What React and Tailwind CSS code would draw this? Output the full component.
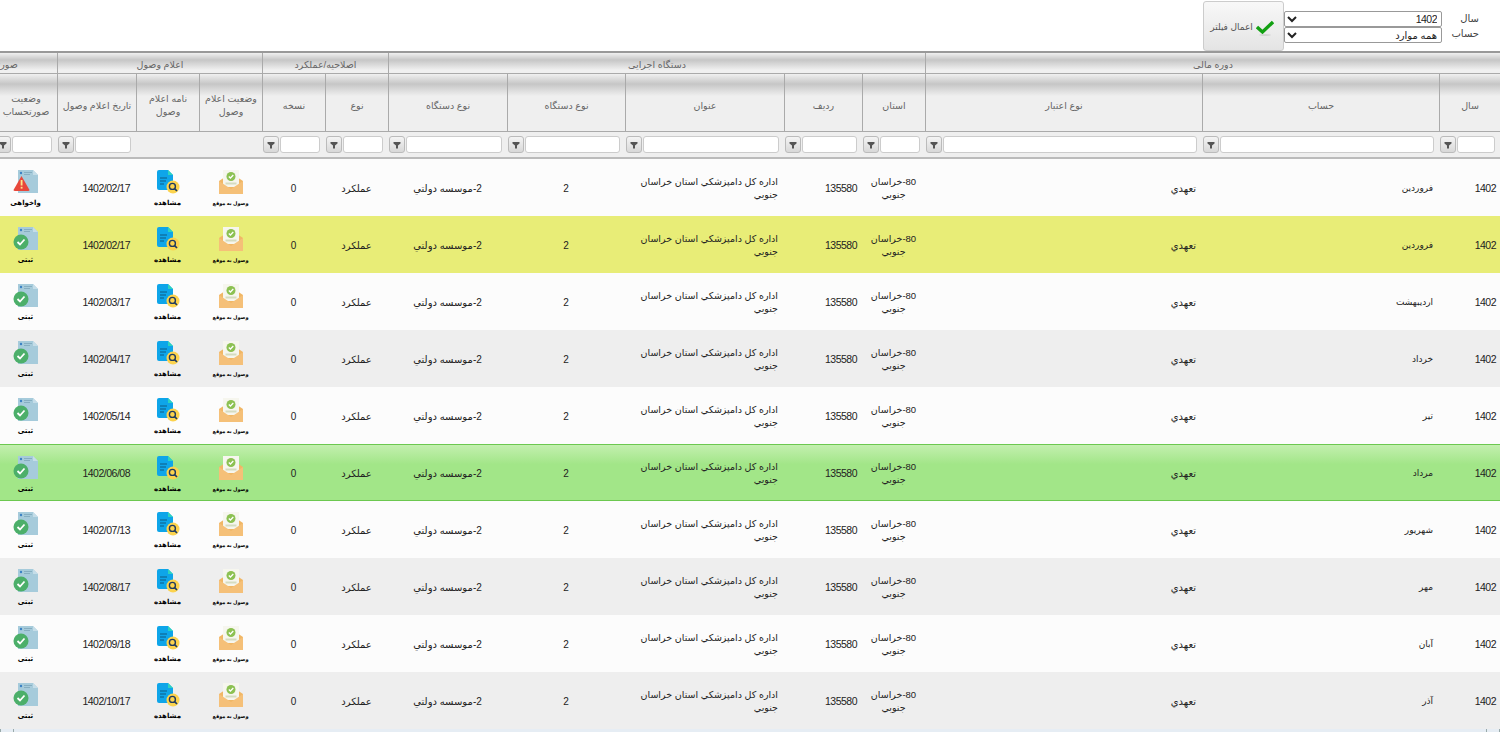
import React from 'react';

const COLS = 'grid grid-cols-[61px_237px_277px_63px_78px_159px_118px_119px_63px_63px_63px_63px_79px_63px]';
const GROUP_COLS = 'grid grid-cols-[575px_537px_126px_205px_126px]';
const FONT = "font-['Liberation_Sans','DejaVu_Sans',sans-serif]";

const groups = ['دوره مالی', 'دستگاه اجرایی', 'اصلاحیه/عملکرد', 'اعلام وصول', 'صورتحساب'];

const columns = [
  { title: 'سال', filter: true },
  { title: 'حساب', filter: true },
  { title: 'نوع اعتبار', filter: true },
  { title: 'استان', filter: true },
  { title: 'ردیف', filter: true },
  { title: 'عنوان', filter: true },
  { title: 'نوع دستگاه', filter: true },
  { title: 'نوع دستگاه', filter: true },
  { title: 'نوع', filter: true },
  { title: 'نسخه', filter: true },
  { title: 'وضعیت اعلام وصول', filter: false },
  { title: 'نامه اعلام وصول', filter: false },
  { title: 'تاریخ اعلام وصول', filter: true },
  { title: 'وضعیت صورتحساب', filter: true },
];

const rows = [
  { month: 'فروردین', date: '1402/02/17', status: 'واخواهی', warn: true },
  { month: 'فروردین', date: '1402/02/17', status: 'ثبتی', tone: 'yellow' },
  { month: 'اردیبهشت', date: '1402/03/17', status: 'ثبتی' },
  { month: 'خرداد', date: '1402/04/17', status: 'ثبتی', tone: 'gray' },
  { month: 'تیر', date: '1402/05/14', status: 'ثبتی' },
  { month: 'مرداد', date: '1402/06/08', status: 'ثبتی', tone: 'green' },
  { month: 'شهریور', date: '1402/07/13', status: 'ثبتی' },
  { month: 'مهر', date: '1402/08/17', status: 'ثبتی', tone: 'gray' },
  { month: 'آبان', date: '1402/09/18', status: 'ثبتی' },
  { month: 'آذر', date: '1402/10/17', status: 'ثبتی', tone: 'gray' },
];

function EnvelopeIcon() {
  return (
    <svg width="24" height="24" viewBox="0 0 24 24">
      <path d="M0 11 L12 3 L24 11 V24 H0 Z" fill="#f0b765" />
      <rect x="4" y="0" width="16" height="17" fill="#f6f6ee" />
      <circle cx="12" cy="6.5" r="4.5" fill="#8cc152" />
      <path d="M9.8 6.5 L11.4 8 L14.3 5" fill="none" stroke="#fff" strokeWidth="1.3" />
      <rect x="6.5" y="12.5" width="11" height="2" fill="#d5dcc0" />
      <path d="M0 11 L12 19 L24 11 V24 H0 Z" fill="#f5c078" />
    </svg>
  );
}

function ViewIcon() {
  return (
    <svg width="24" height="24" viewBox="0 0 24 24">
      <path d="M1 2 Q1 0 3 0 H12 L17 5 V19 Q17 20 15 20 H3 Q1 20 1 18 Z" fill="#0ea5e9" />
      <path d="M12 0 L17 5 H12 Z" fill="#2dd4bf" />
      <path d="M4 8 H11 M4 11 H10 M4 14 H8" stroke="#0f5c86" strokeWidth="1.2" />
      <circle cx="17" cy="17" r="6.5" fill="#fcd34d" />
      <circle cx="16.4" cy="16.4" r="3" fill="none" stroke="#1f3a5f" strokeWidth="1.4" />
      <path d="M18.6 18.6 L21 21" stroke="#1f3a5f" strokeWidth="1.6" />
    </svg>
  );
}

function StatusIcon({ warn }) {
  return (
    <svg width="26" height="24" viewBox="0 0 26 24">
      <path d="M5 0 H20 L25 5 V23 H5 Z" fill="#a6cbdb" />
      <path d="M20 0 L25 5 H20 Z" fill="#c5dde8" />
      <circle cx="8" cy="3" r="1.2" fill="#3b82c4" />
      <path d="M11 2.5 H19 M11 4.5 H17" stroke="#7ea6ba" strokeWidth="0.8" />
      {warn ? (
        <g>
          <path d="M8.5 6 L16.5 20 Q16.5 21 15 21 H2 Q0.5 21 0.5 20 Z" fill="#e8483b" />
          <rect x="7.7" y="10" width="1.8" height="5.5" fill="#fde68a" />
          <rect x="7.7" y="16.8" width="1.8" height="1.8" fill="#fde68a" />
        </g>
      ) : (
        <g>
          <circle cx="8" cy="15" r="7.5" fill="#4caf6a" />
          <path d="M4.5 15 L7 17.5 L11.5 12.5" fill="none" stroke="#fff" strokeWidth="1.8" />
        </g>
      )}
    </svg>
  );
}

function FunnelIcon() {
  return (
    <svg width="8" height="8" viewBox="0 0 8 8">
      <path d="M0.5 1 H7.5 V2.5 L5 4.5 V7.5 H3 V4.5 L0.5 2.5 Z" fill="#555" />
    </svg>
  );
}

function FilterCell({ column }) {
  if (!column.filter) return <div />;
  return (
    <div className="flex flex-row-reverse items-center gap-px pr-[5px] pl-px">
      <span className="flex h-[17px] w-[16px] shrink-0 items-center justify-center rounded-[3px] border border-[#bbb] bg-[linear-gradient(#f4f4f4,#d8d8d8)]">
        <FunnelIcon />
      </span>
      <input className="h-[17px] min-w-0 flex-1 rounded-[3px] border border-[#ccc] bg-white" />
    </div>
  );
}

function IconCell({ icon, label, size }) {
  return (
    <div className="flex flex-col items-center gap-[5px] pt-[11px]">
      {icon}
      <span className={`font-bold leading-none text-black ${size}`}>{label}</span>
    </div>
  );
}

function Row({ row }) {
  const tones = {
    yellow: 'bg-[#e8ed77]',
    gray: 'bg-[#eeeeee]',
    green: 'bg-[linear-gradient(#c3efaf,#a2e688_35%)] border-y border-[#6cc850]',
  };
  const tone = tones[row.tone] || 'bg-[#fcfcfc]';
  const num = 'text-[10.5px] tracking-[-0.5px]';
  return (
    <div className={`${COLS} h-[57px] text-[10px] leading-[13px] text-[#222] ${tone}`}>
      <div className={`flex items-center pt-px pr-1 ${num}`}>1402</div>
      <div className="flex items-center pt-px pr-1.5 text-[9px]">{row.month}</div>
      <div className="flex items-center pt-px pr-1.5">تعهدي</div>
      <div className="flex items-center justify-center px-2 text-center text-[9.5px]">80-خراسان جنوبي</div>
      <div className={`flex items-center pt-px pr-[5px] ${num}`}>135580</div>
      <div className="flex items-center pr-1.5 pl-1 text-[9.5px]">اداره کل دامپزشکي استان خراسان جنوبي</div>
      <div className="flex items-center justify-center pt-px">2</div>
      <div className="flex items-center justify-center pt-px">2-موسسه دولتي</div>
      <div className="flex items-center justify-center pt-px">عملکرد</div>
      <div className="flex items-center justify-center pt-px">0</div>
      <IconCell icon={<EnvelopeIcon />} label="وصول به موقع" size="mt-[2px] text-[5px]" />
      <IconCell icon={<ViewIcon />} label="مشاهده" size="text-[7px]" />
      <div className={`flex items-center pt-px pr-1.5 ${num}`}>{row.date}</div>
      <IconCell icon={<StatusIcon warn={row.warn} />} label={row.status} size="text-[7px]" />
    </div>
  );
}

export default function App() {
  return (
    <div dir="rtl" className={`h-[732px] w-[1500px] overflow-hidden bg-white ${FONT}`}>
      {/* filter bar */}
      <div className="flex h-[53px] items-start border-b-2 border-[#999] pt-px pr-[21px]">
        <div className="w-[37px] pt-[10px] text-[10px] leading-[15px] text-[#444]">
          <div>سال</div>
          <div>حساب</div>
        </div>
        <div className="w-[158px] pt-[10px] text-[10px]">
          <select dir="rtl" className="block h-[16px] w-full rounded-[2px] border border-[#999] bg-white text-[10.5px] leading-none tracking-[-0.5px] text-[#222]">
            <option>1402</option>
          </select>
          <select dir="rtl" className="block h-[16px] w-full rounded-[2px] border border-[#999] bg-white text-[10px] leading-none text-[#222]">
            <option>همه موارد</option>
          </select>
        </div>
        <button className="flex h-[50px] w-[81px] items-center justify-center gap-[3px] rounded-[3px] border border-[#ccc] bg-[linear-gradient(#f8f8f8,#e4e4e4)] pr-[3px] pt-[3px] text-[9px] text-[#555]">
          <svg width="18" height="16" viewBox="0 0 18 16">
            <path d="M1 7 L6.5 12 L17 2" fill="none" stroke="#12a012" strokeWidth="3.4" />
            <ellipse cx="9" cy="15" rx="6" ry="0.7" fill="#ccc" />
          </svg>
          <span>اعمال فیلتر</span>
        </button>
      </div>

      {/* group headers */}
      <div className={`${GROUP_COLS} h-[21px] border-b border-[#aaa] bg-[linear-gradient(#f0f0f0,#c6c6c6_35%,#f0f0f0_85%)] text-[9.5px] leading-[24px] text-[#666]`}>
        {groups.map((g) => (
          <div key={g} className="border-l border-[#aaa] text-center">{g}</div>
        ))}
      </div>

      {/* column headers */}
      <div className={`${COLS} h-[58px] border-b border-[#aaa] bg-[linear-gradient(#f0f0f0,#c6c6c6_10px,#efefef_22px)] text-[9.5px] leading-[13px] text-[#666]`}>
        {columns.map((c, i) => (
          <div key={i} className="flex items-center justify-center border-l border-[#aaa] px-1 pt-[5px] text-center">{c.title}</div>
        ))}
      </div>

      {/* filters */}
      <div className={`${COLS} h-[27px] items-center border-b-2 border-[#bbb] bg-[#efefef]`}>
        {columns.map((c, i) => (
          <FilterCell key={i} column={c} />
        ))}
      </div>

      {rows.map((row, i) => (
        <Row key={i} row={row} />
      ))}

      {/* horizontal scrollbar */}
      <div className="flex h-[4px] justify-between bg-[#e6edf4]">
        <span className="w-[14px] border-x border-[#9aa]" />
        <span className="w-[14px] border-x border-[#9aa]" />
      </div>
    </div>
  );
}
